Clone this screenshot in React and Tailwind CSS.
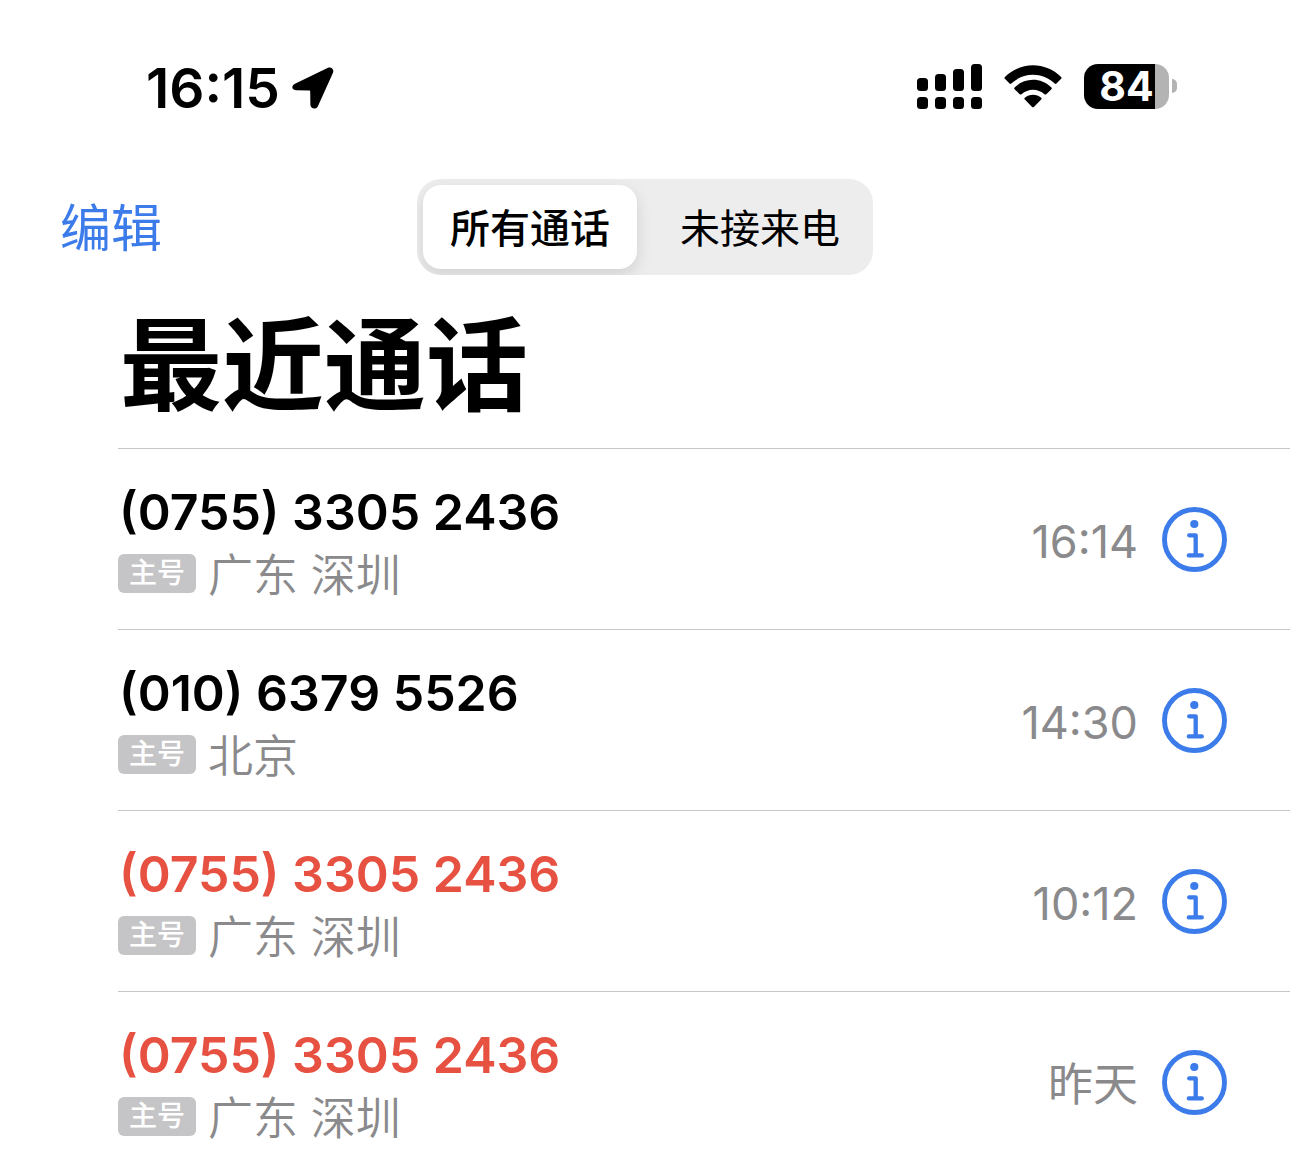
import { useState } from 'react'

const calls = [
    { id: 1, number: '(0755) 3305 2436', place: '广东 深圳', time: '16:14', missed: false },
    { id: 2, number: '(010) 6379 5526', place: '北京', time: '14:30', missed: false },
    { id: 3, number: '(0755) 3305 2436', place: '广东 深圳', time: '10:12', missed: true },
    { id: 4, number: '(0755) 3305 2436', place: '广东 深圳', time: '昨天', missed: true },
]

const tabs = [
    { key: 'all', label: '所有通话' },
    { key: 'missed', label: '未接来电' },
]

function LocationIcon() {
    return (
        <svg width="42" height="42" viewBox="0 0 42 42" aria-hidden="true">
            <path
                d="M3.5 16.5 L35.5 1 C39 -0.6 42.4 2.2 41 5.7 L26 39 C24.3 43 18.6 42 18.4 38 L18.2 24.4 C18.2 23.6 18 23.4 17.2 23.4 L4.5 23.3 C-0.5 23.2 -1.2 18.6 3.5 16.5 Z"
                fill="currentColor"
            />
        </svg>
    )
}

function SignalIcon() {
    return (
        <svg width="65" height="45" viewBox="0 0 65 45" fill="currentColor" aria-hidden="true">
            <rect x="0" y="14" width="11" height="13" rx="3.5" />
            <rect x="18" y="10" width="11" height="17" rx="3.5" />
            <rect x="36" y="5" width="11" height="22" rx="3.5" />
            <rect x="54" y="0" width="11" height="27" rx="3.5" />
            <rect x="0" y="33" width="11" height="12" rx="3.5" />
            <rect x="18" y="33" width="11" height="12" rx="3.5" />
            <rect x="36" y="33" width="11" height="12" rx="3.5" />
            <rect x="54" y="33" width="11" height="12" rx="3.5" />
        </svg>
    )
}

function WifiIcon() {
    return (
        <svg width="58" height="43" viewBox="0 0 58 43" fill="currentColor" aria-hidden="true">
            <path d="M0.9 12 C16.5 -3.6 41.5 -3.6 57.1 12 C57.7 12.6 57.7 13.2 57.1 13.8 L52.5 18.6 C51.9 19.2 51.3 19.2 50.7 18.6 C38.6 6.9 19.4 6.9 7.3 18.6 C6.7 19.2 6.1 19.2 5.5 18.6 L0.9 13.8 C0.3 13.2 0.3 12.6 0.9 12 Z" />
            <path d="M10.6 22.5 C21 12.2 37 12.2 47.4 22.5 C48 23.1 48 23.6 47.4 24.2 L42.3 29.2 C41.7 29.7 41.1 29.7 40.5 29.2 C34 23.2 24 23.2 17.5 29.2 C16.9 29.7 16.3 29.7 15.7 29.2 L10.6 24.2 C10 23.6 10 23.1 10.6 22.5 Z" />
            <path d="M20.8 32.8 C25.4 28.8 32.6 28.8 37.2 32.8 C37.8 33.3 37.8 34 37.2 34.6 L29.9 41.9 C29.3 42.4 28.7 42.4 28.1 41.9 L20.8 34.6 C20.2 34 20.2 33.3 20.8 32.8 Z" />
        </svg>
    )
}

function Battery({ level }) {
    return (
        <div className="flex items-center gap-[3px]">
            <div
                className="flex h-[45px] w-[85px] items-center justify-center rounded-[14px]"
                style={{ background: `linear-gradient(to right, #000 ${level}%, #b3b3b3 ${level}%)` }}
            >
                <span className="text-[41px] leading-[45px] font-bold text-white">{level}</span>
            </div>
            <div className="h-[14px] w-[5px] rounded-r-full bg-[#b3b3b3]" />
        </div>
    )
}

function InfoIcon() {
    return (
        <svg width="65" height="65" viewBox="0 0 65 65" fill="none" stroke="currentColor" aria-hidden="true">
            <circle cx="32.5" cy="32.5" r="30" strokeWidth="4.9" />
            <circle cx="32.3" cy="17" r="4.1" fill="currentColor" stroke="none" />
            <path d="M27.2 28.3 H33.7 V48.2 M26.8 48.4 H39.8" strokeWidth="4.3" strokeLinecap="round" strokeLinejoin="round" />
        </svg>
    )
}

function CallRow({ call }) {
    return (
        <li className="flex items-center border-t border-[#c6c6c8] py-7 pr-[63px] last:pb-3">
            <div className="flex-1">
                <p className={`pt-0.5 pl-px text-[50px] leading-[66px] font-semibold ${call.missed ? 'text-[#e75141]' : 'text-black'}`}>
                    {call.number}
                </p>
                <div className="flex h-14 items-center gap-3">
                    <span className="rounded-md bg-[#c5c5c7] px-[11px] text-[28px] leading-[39px] font-medium text-white">主号</span>
                    <span className="pt-1.5 text-[45px] leading-[50px] font-[350] text-[#8a8a8c]">{call.place}</span>
                </div>
            </div>
            <time className="mr-6 pt-1.5 text-[45px] leading-[56px] text-[#8a8a8c]">{call.time}</time>
            <button type="button" aria-label="通话详情" className="text-[#3b7bea]">
                <InfoIcon />
            </button>
        </li>
    )
}

export default function App() {
    const [filter, setFilter] = useState('all')

    const visibleCalls = filter === 'missed' ? calls.filter((call) => call.missed) : calls

    return (
        <div className="min-h-screen bg-white font-['Inter','Noto_Sans_CJK_SC',sans-serif] text-black">
            {/* Status bar */}
            <div className="flex items-center justify-between pt-14 pr-[113px] pl-[146px]">
                <div className="flex items-center gap-3">
                    <span className="text-[55px] leading-[64px] font-semibold">16:15</span>
                    <LocationIcon />
                </div>
                <div className="flex items-center gap-[22px] pb-1">
                    <SignalIcon />
                    <WifiIcon />
                    <Battery level={84} />
                </div>
            </div>

            {/* Toolbar */}
            <header className="grid grid-cols-[1fr_auto_1fr] items-center px-[60px] pt-[59px]">
                <button type="button" className="justify-self-start pt-1 text-[51px] leading-[64px] text-[#3b7bea]">
                    编辑
                </button>
                <div className="flex gap-4 overflow-hidden rounded-[24px] bg-[#ededed] p-1.5">
                    {tabs.map((tab) => (
                        <button
                            key={tab.key}
                            type="button"
                            aria-pressed={filter === tab.key}
                            onClick={() => setFilter(tab.key)}
                            className={`h-[84px] rounded-[18px] px-[27px] pt-1 text-[40px] ${
                                filter === tab.key ? 'bg-white font-medium shadow-[0_6px_16px_rgba(0,0,0,0.12)]' : 'font-normal'
                            }`}
                        >
                            {tab.label}
                        </button>
                    ))}
                </div>
            </header>

            <main className="pl-[118px]">
                <h1 className="pt-[27px] pb-[18px] pl-0.5 text-[102px] leading-[128px] font-bold">最近通话</h1>
                <ul>
                    {visibleCalls.map((call) => (
                        <CallRow key={call.id} call={call} />
                    ))}
                </ul>
            </main>
        </div>
    )
}
